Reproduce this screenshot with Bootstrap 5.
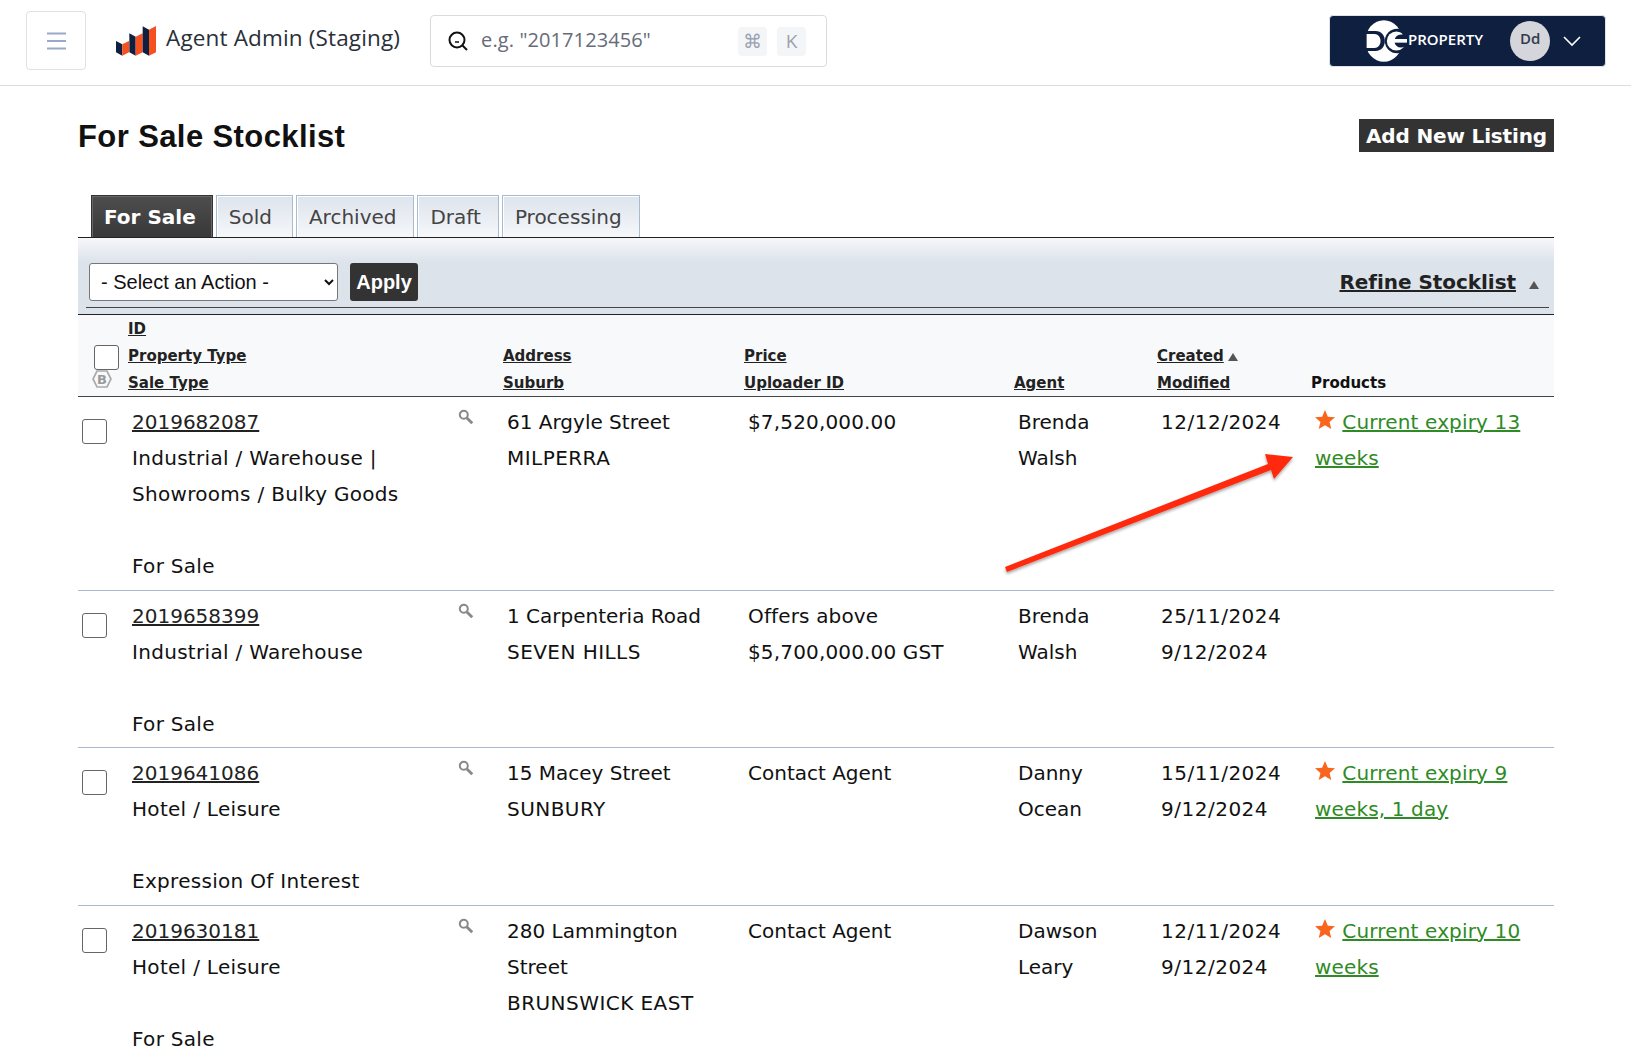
<!DOCTYPE html>
<html lang="en">
<head>
<meta charset="utf-8">
<title>For Sale Stocklist</title>
<link rel="stylesheet" href="https://cdn.jsdelivr.net/npm/bootstrap@5.3.0/dist/css/bootstrap.min.css">
<style>
html,body{overflow:hidden;height:1057px}
body{font-family:"DejaVu Sans",sans-serif;color:#111;background:#fff;position:relative}
.topbar{height:86px;border-bottom:1px solid #ddd;padding:11px 25px 15px 26px}
.menu-btn{width:60px;height:59px;border:1px solid #dfe1e8;border-radius:4px;background:#fff;padding:0}
.brand-wrap{margin-left:30px;height:52px;margin-top:4px}
.brand-name{font-family:"Open Sans",sans-serif;font-size:22.5px;letter-spacing:.15px;color:#2a2f3a;margin-left:10px;white-space:nowrap;padding-bottom:6px}
.search-box{width:397px;height:52px;border:1px solid #d9dbe3;border-radius:4px;margin-left:30px;margin-top:4px;padding:0 20px 0 17px;background:#fff}
.search-hint{font-family:"Open Sans",sans-serif;font-size:20px;letter-spacing:.1px;color:#666c78;margin-left:13px;padding-bottom:3px}
.key-cap{width:29px;height:29px;border-radius:4px;background:#f3f5f6;color:#9aa3b2;font-family:"Open Sans",sans-serif;font-size:19px}
.key-gap{margin-right:10px}
.profile-btn{width:277px;height:52px;background:#0f1f40;border-radius:4px;margin-top:4px;border:1px solid #e0e2e8}
.dg-logo{margin-left:34px}
.dg-word{font-family:"Open Sans",sans-serif;font-weight:600;font-size:15px;color:#fff;margin-left:1px;padding-bottom:4px}
.avatar-dot{width:40px;height:40px;border-radius:50%;background:#d5d6dc;color:#333a4b;font-family:"Open Sans",sans-serif;font-size:15px;font-weight:600;margin-left:27px;padding-bottom:5px}
.chev-ico{margin-left:13px}
.page-wrap{padding:33px 77px 0 78px}
.page-title{font-family:"Liberation Sans",sans-serif;font-weight:700;font-size:31px;line-height:36px;letter-spacing:.4px;margin:0}
.add-listing{font-weight:700;font-size:20px;line-height:33px;height:33px;padding:1px 7px 0;background:#333;color:#fff;border:0;border-radius:0;letter-spacing:-.15px}
.tab-row{margin-top:40px;padding-left:13px;height:43px;border-bottom:1px solid #222;gap:3px}
.tab-item{height:42px;font-size:20px;line-height:42px;padding:0 17px 0 12px;color:#444;border:1px solid #a9bbd0;border-bottom:0;background:linear-gradient(#dde4ed,#f5f7fa);box-shadow:inset 1px 1px 0 #fff}
.tab-item.on{background:linear-gradient(#4e4e4e,#383838);color:#fff;font-weight:700;border-color:#333;box-shadow:inset 1px 1px 0 #666,inset -1px 0 0 #666;padding-right:16px}
.tab-item.tab-sold{padding-right:20px}
.tool-bar{height:76px;background:linear-gradient(#f6f7f9,#dde3eb 32%);padding:25px 5px 0 8px}
.tool-inner{height:45px;border-bottom:1px solid #444;padding:0 10px 6px 3px}
.act-select{width:249px;height:38px;font-family:"Liberation Sans",sans-serif;font-size:20px;border:1px solid #777;border-radius:3px;padding:0 6px 0 7px;background-color:#fff;color:#111}
.apply-btn{height:38px;width:68px;margin-left:12px;background:#333;color:#fff;font-family:"Liberation Sans",sans-serif;font-weight:700;font-size:20px;border:0;border-radius:3px;padding:0}
.refine-wrap{margin-top:4px}
.refine-link{font-weight:700;font-size:20px;color:#222;letter-spacing:-.05px}
.tri-up{display:inline-block;width:0;height:0;border-left:5px solid transparent;border-right:5px solid transparent;border-bottom:8px solid #555}
.tri-big{margin-left:13px;vertical-align:0}
.tri-small{margin-left:4px}
.stock-table{width:1476px;table-layout:fixed;border-collapse:collapse;border-top:1px solid #222;margin:0}
.stock-table th{background:#f8f9fb;height:82px;font-size:15px;line-height:27px;font-weight:700;vertical-align:bottom;padding:0;color:#111;border-bottom:1px solid #444}
.th-stack{margin-bottom:-1px}
.stock-table td{font-size:20px;line-height:36px;vertical-align:top;padding:7px 4px 6px;color:#111;border-bottom:1px solid #a9b8cc;position:relative}
.stock-table .tight-row td{padding-bottom:5px}
.stock-table a{color:#222}
.stock-table td .exp-link{color:#2e8b25;letter-spacing:.15px}
.head-box{width:25px;height:25px;border:1px solid #666;border-radius:3px;margin:0 0 0 16px;display:block;background:#fff}
.row-box{width:25px;height:25px;border:1px solid #666;border-radius:3px;display:block;background:#fff;margin:15px 0 0 0}
.mag-icon{position:absolute;right:29px;top:12px}
.id-cell{padding-right:20px!important;letter-spacing:.3px}
.id-cell a{letter-spacing:0}
.narrow-cell{padding-right:20px!important}
.sub-name{letter-spacing:.45px}
.date-cell{letter-spacing:.5px}
.price-cell{letter-spacing:.15px}
.star-ico{vertical-align:0;margin-right:1px}
.hex-b{display:block;margin-left:14px;margin-bottom:8px}
.arrow-layer{position:absolute;left:0;top:0;pointer-events:none}
</style>
</head>
<body>
<header class="topbar d-flex align-items-start">
  <button class="menu-btn d-flex align-items-center justify-content-center" aria-label="menu">
    <svg width="22" height="18" viewBox="0 0 22 18"><path d="M2 1.500h19M2 9h19M2 16.500h19" stroke="#9aa8c9" stroke-width="2"/></svg>
  </button>
  <div class="brand-wrap d-flex align-items-center">
    <svg width="40" height="30" viewBox="33 33 120 90"><path d="M33 78l19 10v34l-19-10z" fill="#0f1f40"/><path d="M52 88l20-10v34l-20 10z" fill="#f4511e"/><path d="M73 55l19 10v57l-19-10z" fill="#0f1f40"/><path d="M92 65l21-10v57l-21 10z" fill="#f4511e"/><path d="M113 34l19 10v78l-19-10z" fill="#0f1f40"/><path d="M132 44l21-11v79l-21 10z" fill="#f4511e"/></svg>
    <span class="brand-name">Agent Admin (Staging)</span>
  </div>
  <div class="search-box d-flex align-items-center">
    <svg width="20" height="22" viewBox="0 0 20 22"><circle cx="9" cy="10" r="7.500" fill="none" stroke="#111" stroke-width="2"/><path d="M14 15l5 5" stroke="#111" stroke-width="2"/><path d="M7 12h4" stroke="#111" stroke-width="1.500"/></svg>
    <span class="search-hint flex-grow-1">e.g. "2017123456"</span>
    <span class="key-cap key-gap d-flex align-items-center justify-content-center">⌘</span>
    <span class="key-cap d-flex align-items-center justify-content-center">K</span>
  </div>
  <div class="profile-btn d-flex align-items-center ms-auto">
    <svg class="dg-logo" width="43" height="44" viewBox="60 26 130 132"><ellipse cx="120" cy="92" rx="56" ry="63" fill="#fff"/><path d="M60 62h35c18 0 28 14 28 30s-10 30-28 30H60z" fill="#0f1f40"/><path d="M68 71h24c10 0 18 9 18 21s-8 21-18 21H68z" fill="#fff"/><circle cx="160" cy="92" r="37" fill="#0f1f40"/><circle cx="158" cy="92" r="29" fill="#fff"/><circle cx="172" cy="92" r="20" fill="#0f1f40"/><path d="M150 86h40v11h-40z" fill="#fff"/><path d="M176 62h16v24h-16z" fill="#0f1f40"/></svg>
    <span class="dg-word">PROPERTY</span>
    <span class="avatar-dot d-flex align-items-center justify-content-center">Dd</span>
    <svg class="chev-ico" width="18" height="12" viewBox="0 0 18 12"><path d="M1 2l8 8 8-8" fill="none" stroke="#fff" stroke-width="1.600"/></svg>
  </div>
</header>
<main class="page-wrap">
  <div class="d-flex justify-content-between align-items-start">
    <h1 class="page-title">For Sale Stocklist</h1>
    <button class="add-listing">Add New Listing</button>
  </div>
  <div class="tab-row d-flex">
    <div class="tab-item on">For Sale</div>
    <div class="tab-item tab-sold">Sold</div>
    <div class="tab-item">Archived</div>
    <div class="tab-item">Draft</div>
    <div class="tab-item">Processing</div>
  </div>
  <div class="tool-bar">
    <div class="tool-inner d-flex align-items-start justify-content-between">
      <div class="d-flex">
        <select class="act-select"><option>- Select an Action -</option></select>
        <button class="apply-btn">Apply</button>
      </div>
      <div class="refine-wrap"><a href="#" class="refine-link">Refine Stocklist</a><span class="tri-up tri-big"></span></div>
    </div>
  </div>
  <table class="stock-table">
    <colgroup><col style="width:50px"><col style="width:375px"><col style="width:241px"><col style="width:270px"><col style="width:143px"><col style="width:154px"><col style="width:243px"></colgroup>
    <thead>
      <tr>
        <th><span class="head-box"></span><svg class="hex-b" width="20" height="18" viewBox="0 0 20 18"><path d="M5 1h10l4 8-4 8H5L1 9z" fill="none" stroke="#aaa" stroke-width="1.700"/><text x="10" y="14" text-anchor="middle" font-size="13" font-weight="700" fill="#999" font-family="DejaVu Sans">B</text></svg></th>
        <th><div class="th-stack"><a href="#">ID</a><br><a href="#">Property Type</a><br><a href="#">Sale Type</a></div></th>
        <th><div class="th-stack"><a href="#">Address</a><br><a href="#">Suburb</a></div></th>
        <th><div class="th-stack"><a href="#">Price</a><br><a href="#">Uploader ID</a></div></th>
        <th><div class="th-stack"><a href="#">Agent</a></div></th>
        <th><div class="th-stack"><a href="#">Created</a><span class="tri-up tri-small"></span><br><a href="#">Modified</a></div></th>
        <th><div class="th-stack">Products</div></th>
      </tr>
    </thead>
    <tbody>
      <tr>
        <td><span class="row-box"></span></td>
        <td class="id-cell"><a href="#">2019682087</a><svg class="mag-icon" width="16" height="16" viewBox="0 0 18 18"><circle cx="6.500" cy="6.500" r="4.500" fill="none" stroke="#888" stroke-width="2.200"/><path d="M10 10l6 6" stroke="#888" stroke-width="3.200"/></svg><br>Industrial / Warehouse | Showrooms / Bulky Goods<br><br>For Sale</td>
        <td class="narrow-cell">61 Argyle Street<br><span class="sub-name">MILPERRA</span></td>
        <td class="price-cell">$7,520,000.00</td>
        <td class="narrow-cell">Brenda Walsh</td>
        <td class="date-cell">12/12/2024</td>
        <td><svg class="star-ico" width="20" height="19" viewBox="0 0 21 20"><path d="M10.500 0l3 7 7.500.6-5.700 4.900 1.800 7.500-6.600-4-6.600 4 1.800-7.500L0 7.600 7.500 7z" fill="#f9651c"/></svg> <a href="#" class="exp-link">Current expiry 13 weeks</a></td>
      </tr>
      <tr class="tight-row">
        <td><span class="row-box"></span></td>
        <td class="id-cell"><a href="#">2019658399</a><svg class="mag-icon" width="16" height="16" viewBox="0 0 18 18"><circle cx="6.500" cy="6.500" r="4.500" fill="none" stroke="#888" stroke-width="2.200"/><path d="M10 10l6 6" stroke="#888" stroke-width="3.200"/></svg><br>Industrial / Warehouse<br><br>For Sale</td>
        <td class="narrow-cell">1 Carpenteria Road<br><span class="sub-name">SEVEN HILLS</span></td>
        <td class="price-cell">Offers above<br>$5,700,000.00 GST</td>
        <td class="narrow-cell">Brenda Walsh</td>
        <td class="date-cell">25/11/2024<br>9/12/2024</td>
        <td></td>
      </tr>
      <tr>
        <td><span class="row-box"></span></td>
        <td class="id-cell"><a href="#">2019641086</a><svg class="mag-icon" width="16" height="16" viewBox="0 0 18 18"><circle cx="6.500" cy="6.500" r="4.500" fill="none" stroke="#888" stroke-width="2.200"/><path d="M10 10l6 6" stroke="#888" stroke-width="3.200"/></svg><br>Hotel / Leisure<br><br>Expression Of Interest</td>
        <td class="narrow-cell">15 Macey Street<br><span class="sub-name">SUNBURY</span></td>
        <td>Contact Agent</td>
        <td class="narrow-cell">Danny Ocean</td>
        <td class="date-cell">15/11/2024<br>9/12/2024</td>
        <td><svg class="star-ico" width="20" height="19" viewBox="0 0 21 20"><path d="M10.500 0l3 7 7.500.6-5.700 4.900 1.800 7.500-6.600-4-6.600 4 1.800-7.500L0 7.600 7.500 7z" fill="#f9651c"/></svg> <a href="#" class="exp-link">Current expiry 9 weeks, 1 day</a></td>
      </tr>
      <tr>
        <td><span class="row-box"></span></td>
        <td class="id-cell"><a href="#">2019630181</a><svg class="mag-icon" width="16" height="16" viewBox="0 0 18 18"><circle cx="6.500" cy="6.500" r="4.500" fill="none" stroke="#888" stroke-width="2.200"/><path d="M10 10l6 6" stroke="#888" stroke-width="3.200"/></svg><br>Hotel / Leisure<br><br>For Sale</td>
        <td class="narrow-cell">280 Lammington Street<br><span class="sub-name">BRUNSWICK EAST</span></td>
        <td>Contact Agent</td>
        <td class="narrow-cell">Dawson Leary</td>
        <td class="date-cell">12/11/2024<br>9/12/2024</td>
        <td><svg class="star-ico" width="20" height="19" viewBox="0 0 21 20"><path d="M10.500 0l3 7 7.500.6-5.700 4.900 1.800 7.500-6.600-4-6.600 4 1.800-7.500L0 7.600 7.500 7z" fill="#f9651c"/></svg> <a href="#" class="exp-link">Current expiry 10 weeks</a></td>
      </tr>
    </tbody>
  </table>
</main>
<svg class="arrow-layer" width="1631" height="1057" viewBox="0 0 1631 1057">
  <defs><filter id="arrow-shadow" x="-5%" y="-5%" width="110%" height="120%"><feDropShadow dx="0" dy="2" stdDeviation="1.500" flood-color="#000" flood-opacity=".35"/></filter></defs>
  <path d="M1005 567L1268 464 1265 454 1293 457 1274 479 1271 470 1007 572z" fill="#ff2a0a" filter="url(#arrow-shadow)"/>
</svg>
<script src="https://cdn.jsdelivr.net/npm/bootstrap@5.3.0/dist/js/bootstrap.bundle.min.js"></script>
</body>
</html>
